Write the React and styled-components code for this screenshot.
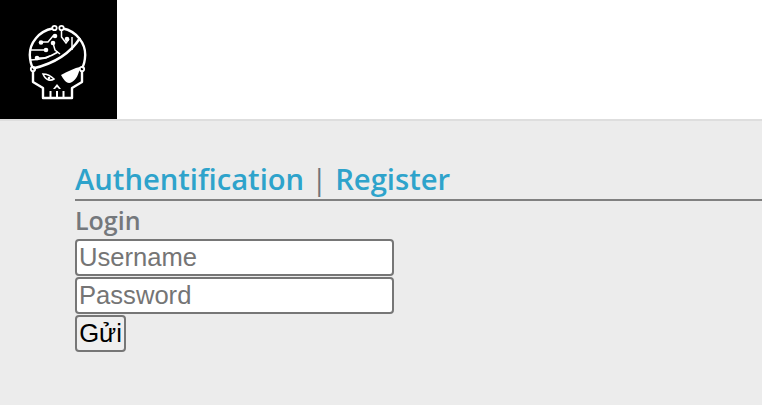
import React from 'react'
import styled, { createGlobalStyle } from 'styled-components'

const GlobalStyle = createGlobalStyle`
  html, body {
    margin: 0;
    background: #ececec;
    font-family: "Open Sans", sans-serif;
  }
`

const Header = styled.header`
  height: 119px;
  background: #fff;
  border-bottom: 2px solid #dedede;
`

const LogoBox = styled.div`
  width: 117px;
  height: 119px;
  background: #000;
`

const Main = styled.main`
  padding: 40px 0 0 75px;
`

const Title = styled.h1`
  margin: 0;
  height: 38px;
  font-size: 29.2px;
  line-height: 36px;
  font-weight: 600;
  color: #6f7479;
  border-bottom: 2px solid #808080;
  white-space: nowrap;
`

const TitleLink = styled.a`
  color: #2ea3cb;
  text-decoration: none;
`

const Divider = styled.span`
  font-weight: 400;
  margin: 0 8px 0 7px;
`

const Subtitle = styled.h2`
  margin: 1px 0 0;
  font-size: 25px;
  line-height: 36px;
  height: 37px;
  font-weight: 600;
  color: #74787c;
`

const Form = styled.form`
  display: flex;
  flex-direction: column;
  align-items: flex-start;
  gap: 1px;
`

const Input = styled.input`
  box-sizing: border-box;
  width: 319px;
  height: 37px;
  padding: 1px 2px;
  border: 2px solid #767676;
  border-radius: 4px;
  background: #fff;
  font-family: "Liberation Sans", Arial, sans-serif;
  font-size: 25.6px;
  &::placeholder {
    color: #757575;
    opacity: 1;
  }
`

const Submit = styled.button`
  box-sizing: border-box;
  width: 51px;
  height: 37px;
  padding: 0;
  border: 2px solid #767676;
  border-radius: 4px;
  background: #efefef;
  color: #000;
  font-family: "Liberation Sans", Arial, sans-serif;
  font-size: 25.6px;
`

const SkullLogo = () => (
  <svg width="117" height="119" viewBox="0 0 117 119" fill="none" stroke="#fff" strokeWidth="2.400">
    <path d="M52.500 28.500C39 31 29.500 43 29.800 55C30 60 31 65 33 68" />
    <path d="M63 28.500C76 31 85.500 43 85.200 55C85 60 84 65 82 68" />
    <path d="M33 68.500C52 64 70 54 80 38" />
    <path d="M30 60C40 60 50 57 58 52" strokeWidth="1.600" />
    <path d="M33 71V82L43 88V98H72V88L82 82V71" strokeLinejoin="round" />
    <circle cx="54.500" cy="28" r="2.200" strokeWidth="1.800" />
    <circle cx="61.500" cy="28" r="2.200" strokeWidth="1.800" />
    <circle cx="33" cy="69" r="2.200" strokeWidth="1.800" />
    <circle cx="82" cy="69" r="2.200" strokeWidth="1.800" />
    <g strokeWidth="1.500">
      <path d="M41 42H48L53 36H55" />
      <path d="M30 50H46" />
      <path d="M37 58H46L50 56" />
      <path d="M53 43L55 50L60 54" />
      <path d="M61.500 30V37L66 43L69 39" />
      <path d="M72 37V50" />
    </g>
    <g fill="#fff" stroke="none">
      <circle cx="41" cy="42.500" r="2.300" />
      <circle cx="46" cy="50" r="2.300" />
      <circle cx="37" cy="58" r="2.300" />
      <circle cx="55" cy="36" r="2.300" />
      <circle cx="53" cy="43" r="2.300" />
      <circle cx="67" cy="39" r="2.300" />
      <path d="M61 75C68 71 75 68 80 67C79 74 76 80 72 82C67 85 64 80 61 75Z" />
      <path d="M57 84L61 89H59L57 87L55 89H53Z" />
      <path d="M49.500 91h2v7h-2zM56 91h2v7h-2zM62.500 91h2v7h-2z" />
    </g>
    <path d="M43 74C47 74 51 76 54 79C51 81 46 81 43 74Z" strokeWidth="1.600" />
    <circle cx="49" cy="78" r="1.300" fill="#fff" stroke="none" />
  </svg>
)

const App = () => (
  <>
    <GlobalStyle />
    <Header>
      <LogoBox>
        <SkullLogo />
      </LogoBox>
    </Header>
    <Main>
      <Title>
        <TitleLink href="#">Authentification</TitleLink>
        <Divider>|</Divider>
        <TitleLink href="#">Register</TitleLink>
      </Title>
      <Subtitle>Login</Subtitle>
      <Form onSubmit={(event) => event.preventDefault()}>
        <Input type="text" placeholder="Username" />
        <Input type="password" placeholder="Password" />
        <Submit type="submit">Gửi</Submit>
      </Form>
    </Main>
  </>
)

export default App
